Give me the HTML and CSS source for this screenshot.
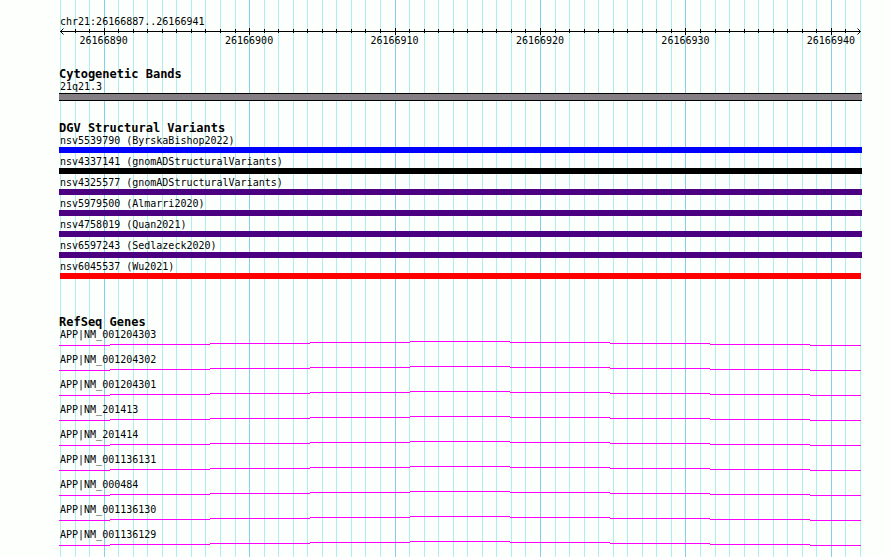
FILE: index.html
```html
<!DOCTYPE html>
<html lang="en">
<head>
  <meta charset="UTF-8">
  <meta name="viewport" content="width=device-width, initial-scale=1.0">
  <title>chr21:26166887..26166941</title>
  <link rel="stylesheet" href="styles.css">
</head>
<body>
  <main class="browser">
    <!-- Vertical grid lines, filled in by script.js -->
    <svg class="grid" id="grid" aria-hidden="true"></svg>

    <header class="region">
      <p class="label">chr21:26166887..26166941</p>
      <svg class="ruler" id="ruler" role="img" aria-label="Position on chr21">
        <rect x="0" y="3" width="100%" height="1"/>
        <path class="arrow" d="M3.5 0.5 L0.5 3.5 L3.5 6.5"/>
        <svg class="arrow-end" x="100%">
          <path class="arrow" d="M-2.5 0.5 L0.5 3.5 L-2.5 6.5"/>
        </svg>
      </svg>
    </header>

    <section class="section">
      <h2>Cytogenetic Bands</h2>
      <p class="label">21q21.3</p>
      <div class="band"></div>
    </section>

    <section class="section variants">
      <h2>DGV Structural Variants</h2>
      <div class="variant">
        <p class="label">nsv5539790 (ByrskaBishop2022)</p>
        <div class="bar blue"></div>
      </div>
      <div class="variant">
        <p class="label">nsv4337141 (gnomADStructuralVariants)</p>
        <div class="bar black"></div>
      </div>
      <div class="variant">
        <p class="label">nsv4325577 (gnomADStructuralVariants)</p>
        <div class="bar indigo"></div>
      </div>
      <div class="variant">
        <p class="label">nsv5979500 (Almarri2020)</p>
        <div class="bar indigo"></div>
      </div>
      <div class="variant">
        <p class="label">nsv4758019 (Quan2021)</p>
        <div class="bar indigo"></div>
      </div>
      <div class="variant">
        <p class="label">nsv6597243 (Sedlazeck2020)</p>
        <div class="bar indigo"></div>
      </div>
      <div class="variant">
        <p class="label">nsv6045537 (Wu2021)</p>
        <div class="bar red"></div>
      </div>
    </section>

    <section class="section genes">
      <h2>RefSeq Genes</h2>
      <!-- Intron line shared by all the transcripts -->
      <svg class="defs" aria-hidden="true">
        <symbol id="intron" viewBox="0 0 802 5" preserveAspectRatio="none">
          <path d="M0 4h51v1H0z M51 3h100v1H51z M151 2h100v1H151z M251 1h100v1H251z M351 0h100v1H351z M451 1h100v1H451z M551 2h100v1H551z M651 3h100v1H651z M751 4h51v1H751z"/>
        </symbol>
      </svg>
      <div class="gene">
        <p class="label">APP|NM_001204303</p>
        <svg class="intron"><use href="#intron"/></svg>
      </div>
      <div class="gene">
        <p class="label">APP|NM_001204302</p>
        <svg class="intron"><use href="#intron"/></svg>
      </div>
      <div class="gene">
        <p class="label">APP|NM_001204301</p>
        <svg class="intron"><use href="#intron"/></svg>
      </div>
      <div class="gene">
        <p class="label">APP|NM_201413</p>
        <svg class="intron"><use href="#intron"/></svg>
      </div>
      <div class="gene">
        <p class="label">APP|NM_201414</p>
        <svg class="intron"><use href="#intron"/></svg>
      </div>
      <div class="gene">
        <p class="label">APP|NM_001136131</p>
        <svg class="intron"><use href="#intron"/></svg>
      </div>
      <div class="gene">
        <p class="label">APP|NM_000484</p>
        <svg class="intron"><use href="#intron"/></svg>
      </div>
      <div class="gene">
        <p class="label">APP|NM_001136130</p>
        <svg class="intron"><use href="#intron"/></svg>
      </div>
      <div class="gene">
        <p class="label">APP|NM_001136129</p>
        <svg class="intron"><use href="#intron"/></svg>
      </div>
    </section>
  </main>

  <script src="script.js"></script>
</body>
</html>
```
FILE: styles.css
```css
body {
  margin: 0;
  background-color: #fcfffc;
  color: #000;
  font-family: "DejaVu Sans Mono", "Liberation Mono", monospace;
}
.browser {
  position: relative;
  box-sizing: border-box;
  min-height: 100vh;
  margin: 0 28px 0 59px;
  padding-top: 16px;
}
/* Grid sits behind all the tracks */
.grid {
  position: absolute;
  z-index: -1;
  top: 0;
  left: 1px;
  width: calc(100% - 3px);
  height: 100%;
  overflow: visible;
  fill: #afeeee;
  shape-rendering: crispEdges;
}
.grid .major {
  fill: #87ceeb;
}
h2 {
  margin: 0;
  font-size: 12px;
  line-height: 13px;
}
.label {
  margin: 0;
  padding-left: 1px;
  font-size: 10px;
  line-height: 12px;
  white-space: nowrap;
}
.ruler {
  display: block;
  width: calc(100% - 3px);
  height: 40px;
  margin-left: 1px;
  overflow: visible;
  font-size: 10px;
  text-anchor: middle;
}
.ruler rect {
  shape-rendering: crispEdges;
}
.arrow {
  fill: none;
  stroke: #000;
}
.arrow-end {
  overflow: visible;
}
.section {
  margin-bottom: 21px;
}
.band {
  height: 6px;
  background-color: #847f84;
  border-top: 1px solid #000;
  border-bottom: 1px solid #000;
}
.variants {
  margin-bottom: 34px;
}
.variant {
  margin-bottom: 3px;
  padding-bottom: 0;
}
.variants::after {
  content: "";
  display: table;
}
.bar {
  height: 6px;
}
.blue {
  background-color: #0000ff;
}
.black {
  background-color: #000;
}
.indigo {
  background-color: #4b0082;
}
.red {
  margin: 0 1px;
  background-color: #ff0000;
}
.genes {
  margin-bottom: 0;
}
.defs {
  position: absolute;
  width: 0;
  height: 0;
}
.gene {
  padding-bottom: 8px;
}
.intron {
  display: block;
  width: calc(100% - 1px);
  height: 5px;
  fill: #ff00ff;
  shape-rendering: crispEdges;
}
```
FILE: script.js
```js
const start = 26166887;
const end = 26166942;
const svgNS = 'http://www.w3.org/2000/svg';
const grid = document.getElementById('grid');
const ruler = document.getElementById('ruler');

function addRect(parent, x, y, height, className) {
  const rect = document.createElementNS(svgNS, 'rect');
  rect.setAttribute('x', x);
  rect.setAttribute('y', y);
  rect.setAttribute('width', 1);
  rect.setAttribute('height', height);
  rect.setAttribute('class', className);
  parent.appendChild(rect);
}

// One line per base, a stronger one with a number every 10 bases
for (let pos = start; pos <= end; pos++) {
  const x = (pos - start) / (end - start) * 100 + '%';
  const major = pos % 10 === 0;
  addRect(grid, x, 0, '100%', major ? 'major' : 'minor');

  if (major) {
    addRect(ruler, x, 0, 7, 'tick');
    const text = document.createElementNS(svgNS, 'text');
    text.setAttribute('x', x);
    text.setAttribute('y', 16);
    text.textContent = pos;
    ruler.appendChild(text);
  } else if (pos > start && pos < end) {
    addRect(ruler, x, 1, 4, 'tick');
  }
}
```
